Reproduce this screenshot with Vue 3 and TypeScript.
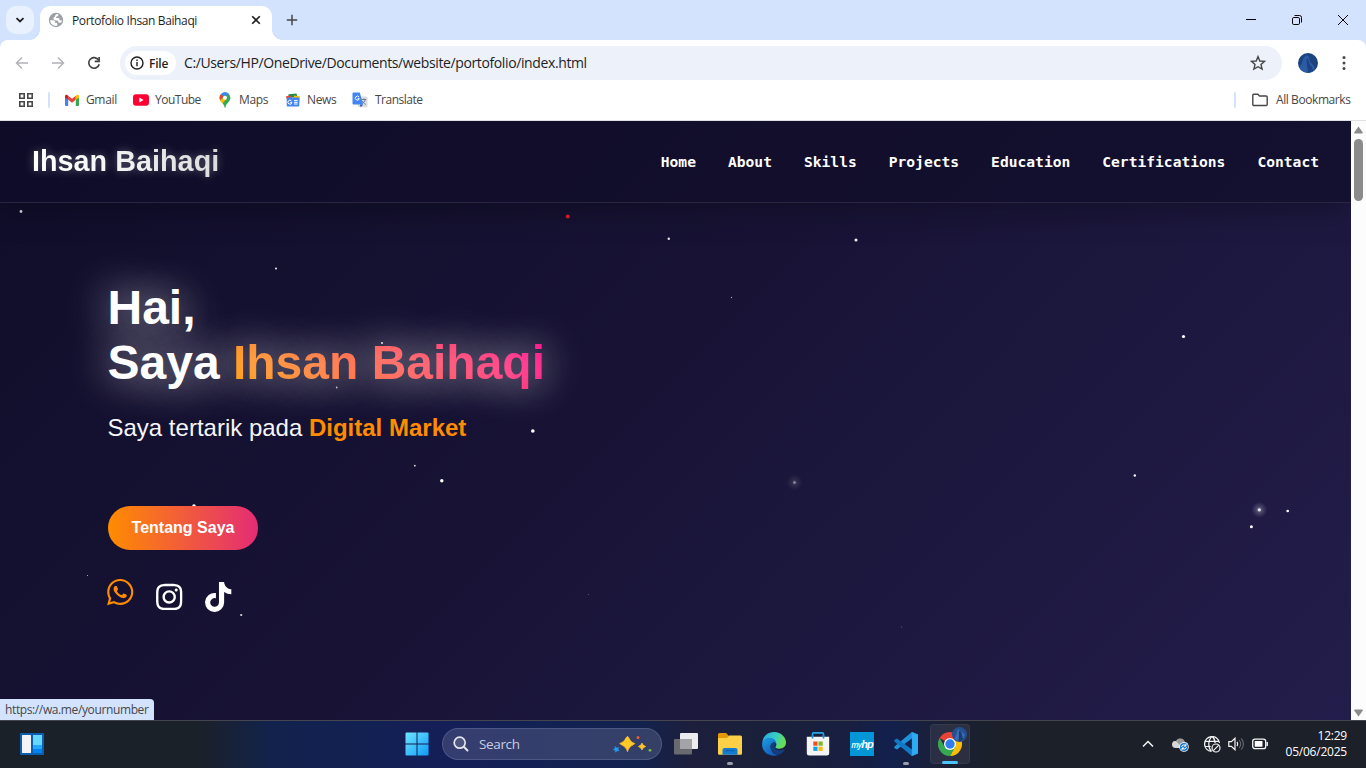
<script setup lang="ts">
interface Star { x: number; y: number; r: number; alpha: number; color?: string; glow?: number }

const navItems: string[] = ['Home', 'About', 'Skills', 'Projects', 'Education', 'Certifications', 'Contact']

const stars: Star[] = [
  { x: 21, y: 90.5, r: 1.4, alpha: 0.85 },
  { x: 567.8, y: 95.5, r: 2, alpha: 1, color: '#ee1c25' },
  { x: 668.8, y: 117.8, r: 1.2, alpha: 0.9 },
  { x: 856, y: 119, r: 1.5, alpha: 0.95 },
  { x: 276, y: 147.5, r: 1.1, alpha: 0.85 },
  { x: 731.5, y: 176.5, r: 0.7, alpha: 0.6 },
  { x: 1183.5, y: 215.5, r: 1.6, alpha: 1 },
  { x: 382, y: 222, r: 1.1, alpha: 0.85 },
  { x: 336.7, y: 266.5, r: 0.9, alpha: 0.7 },
  { x: 532.8, y: 310, r: 1.8, alpha: 1 },
  { x: 414.8, y: 344.7, r: 0.9, alpha: 0.85 },
  { x: 441.8, y: 359.8, r: 1.7, alpha: 1 },
  { x: 194, y: 385, r: 1.8, alpha: 1 },
  { x: 794.5, y: 361.5, r: 1.2, alpha: 0.45, glow: 0.2 },
  { x: 1134.8, y: 354.5, r: 1.2, alpha: 0.95 },
  { x: 1259.3, y: 388.8, r: 1.6, alpha: 0.8, glow: 0.45 },
  { x: 1287.7, y: 390, r: 1.3, alpha: 1 },
  { x: 1251.4, y: 405.8, r: 1.5, alpha: 1 },
  { x: 87.5, y: 454.5, r: 0.6, alpha: 0.7 },
  { x: 241.2, y: 494, r: 1.1, alpha: 0.85 },
  { x: 588.5, y: 473.5, r: 0.6, alpha: 0.3 },
  { x: 901.5, y: 506, r: 0.6, alpha: 0.3 },
]
</script>

<template>
  <div class="screen">
    <div class="tabstrip">
      <div class="tab-search">
        <svg width="10" height="10" viewBox="0 0 10 10"><path d="M1.500 3.200 5 6.500 8.500 3.200" fill="none" stroke="#1f1f1f" stroke-width="1.800" /></svg>
      </div>
      <div class="tab">
        <svg class="favicon" width="16" height="16" viewBox="0 0 16 16">
          <circle cx="8" cy="8" r="7.200" fill="#9aa0a6" />
          <path d="M8.200 2.300h2.300c0 1.300-.6 2-1.600 2.200-.9.200-1 .9-.7 1.500h2.300c.9 0 1 .8 1 1.400 0 .7.600.9 1 .9h1.300c0 1-.2 1.700-.6 2.400h-1.600c-1 0-1.600-.7-1.600-1.500 0-.5-.4-.8-.9-.8H7.400C6.200 8.400 5.500 7.500 5.500 6.500S6.200 4.700 7 4.700C7 3.500 7.600 3 8.200 2.300zM2.100 8.200h3c1.300 0 1.900.8 1.900 1.700v.8h1.200c.7 0 1.100.5 1.100 1.100v1.900C5.400 14.400 2.200 11.700 2.100 8.200z" fill="#fff" />
        </svg>
        <span class="tab-title">Portofolio Ihsan Baihaqi</span>
        <svg class="tab-close" width="10" height="10" viewBox="0 0 10 10"><path d="M1.200 1.200l7.600 7.600M8.800 1.200L1.200 8.800" stroke="#1f1f1f" stroke-width="1.600" /></svg>
      </div>
      <svg class="new-tab" width="12" height="12" viewBox="0 0 12 12"><path d="M6 .8v10.400M.8 6h10.400" stroke="#474747" stroke-width="1.500" /></svg>
      <div class="win-controls">
        <svg width="12" height="12" viewBox="0 0 12 12"><path d="M1 5.500h10" stroke="#000" /></svg>
        <svg width="12" height="12" viewBox="0 0 12 12"><rect x="1.500" y="3.500" width="7" height="7" rx="1.300" fill="none" stroke="#000" /><path d="M3.500 1.500H8.500a2 2 0 0 1 2 2v5" fill="none" stroke="#000" /></svg>
        <svg width="12" height="12" viewBox="0 0 12 12"><path d="M1 1l10 10M11 1L1 11" stroke="#000" /></svg>
      </div>
    </div>

    <div class="toolbar">
      <svg class="nav-ic" width="16" height="16" viewBox="0 0 16 16"><path d="M14 8H2.800M8 2.500 2.500 8 8 13.500" fill="none" stroke="#b1b3b6" stroke-width="1.500" /></svg>
      <svg class="nav-ic" width="16" height="16" viewBox="0 0 16 16"><path d="M2 8h11.200M8 2.500 13.500 8 8 13.500" fill="none" stroke="#b1b3b6" stroke-width="1.500" /></svg>
      <svg class="nav-ic" width="16" height="16" viewBox="0 0 16 16"><path d="M12.600 5.200A5.300 5.300 0 1 0 13.200 9.200" fill="none" stroke="#3c3f41" stroke-width="1.600" /><path d="M13.900 2v5.200H8.700V5.600h3.600V2z" fill="#3c3f41" /></svg>
      <div class="omnibox">
        <div class="file-chip">
          <svg width="14" height="14" viewBox="0 0 14 14"><circle cx="7" cy="7" r="6" fill="none" stroke="#1f1f1f" stroke-width="1.400" /><path d="M7 6v4.200M7 3.600v1.400" stroke="#1f1f1f" stroke-width="1.400" /></svg>
          <span>File</span>
        </div>
        <span class="url">C:/Users/HP/OneDrive/Documents/website/portofolio/index.html</span>
        <svg class="star-ic" width="16" height="16" viewBox="0 0 16 16"><path d="M8 1.600l1.800 4.400 4.800.4-3.600 3.100 1.100 4.600L8 11.700l-4.100 2.400L5 9.500 1.400 6.400l4.800-.4z" fill="none" stroke="#474747" stroke-width="1.400" /></svg>
      </div>
      <div class="avatar">
        <svg width="20" height="20" viewBox="0 0 20 20"><path d="M1 15C3 12 4.500 10 5 6l3-4 3 2 1 5 4 4 1 7H4z" fill="#2b5ca3" /><path d="M9 5c2 1 1.500 4 2.500 6s3.500 3 3.500 7l-5 2c0-5-2-8-1-15z" fill="#1b4284" /></svg>
      </div>
      <svg class="more" width="4" height="14" viewBox="0 0 4 14"><circle cx="2" cy="1.600" r="1.500" fill="#474747" /><circle cx="2" cy="7" r="1.500" fill="#474747" /><circle cx="2" cy="12.400" r="1.500" fill="#474747" /></svg>
    </div>

    <div class="bookmarks">
      <svg class="apps" width="14" height="14" viewBox="0 0 14 14"><path d="M.8.8h4.400v4.400H.8zM8.800.8h4.400v4.400H8.800zM.8 8.800h4.400v4.400H.8zM8.800 8.800h4.400v4.400H8.800z" fill="none" stroke="#474747" stroke-width="1.600" /></svg>
      <i class="sep"></i>
      <div class="bm gmail">
        <svg width="16" height="16" viewBox="0 0 16 16"><path d="M1 3.500V13a.9.9 0 0 0 .9.900H4.200V6.500z" fill="#4285f4" /><path d="M15 3.500V13a.9.9 0 0 1-.9.900h-2.300V6.500z" fill="#34a853" /><path d="M4.200 7.800V3.800L8 6.700l3.800-2.900v4L8 10.700z" fill="#ea4335" /><path d="M1 4.300C1 2.500 2.900 2.200 4.200 3.800v4L1 5.500z" fill="#c5221f" /><path d="M15 4.300c0-1.800-1.900-2.100-3.200-.5v4L15 5.500z" fill="#fbbc04" /></svg>
        <span>Gmail</span>
      </div>
      <div class="bm youtube">
        <svg width="16" height="16" viewBox="0 0 16 16"><rect x="0" y="2.300" width="16" height="11.400" rx="3" fill="#ff0033" /><path d="M6.300 5.600v4.800L10.500 8z" fill="#fff" /></svg>
        <span>YouTube</span>
      </div>
      <div class="bm maps">
        <svg width="16" height="16" viewBox="0 0 16 16"><path d="M8 .3a5.400 5.400 0 0 0-5.400 5.400C2.600 9.700 7 11 7.500 15.200c.1.700.9.700 1 0C9 11 13.400 9.700 13.400 5.700A5.400 5.400 0 0 0 8 .3z" fill="#34a853" /><path d="M8 .3a5.400 5.400 0 0 0-4.100 1.900L6.500 4.500 12.200 2.300A5.400 5.400 0 0 0 8 .3z" fill="#4285f4" /><path d="M3.900 2.200a5.400 5.400 0 0 0-.8 5.700L6.500 4.500z" fill="#ea4335" /><path d="M3.100 7.900c.6 1.300 1.600 2.300 2.500 3.400L9.500 7 6.300 6z" fill="#fbbc04" /><circle cx="8" cy="5.700" r="2" fill="#fff" /></svg>
        <span>Maps</span>
      </div>
      <div class="bm news">
        <svg width="16" height="16" viewBox="0 0 16 16"><path d="M3.500 2.300 11.500 1.500l1 4H3.500z" fill="#1e8e4a" /><path d="M.9 4.600l4-1.300 3 4H1.900z" fill="#ea4335" /><path d="M9 3.500l6.200.9-.9 6H9z" fill="#fbbc04" /><rect x="1.700" y="5.600" width="12.600" height="9" rx="1" fill="#4285f4" /><path d="M6.500 9a2 2 0 1 0 .4 1.500H5.300M9 8.600h3.600M9 10.300h3.600M9 12h3.600" fill="none" stroke="#fff" stroke-width="1" /></svg>
        <span>News</span>
      </div>
      <div class="bm translate">
        <svg width="16" height="16" viewBox="0 0 16 16"><rect x="6" y="4.500" width="9.500" height="10.800" rx="1" fill="#dadce0" /><path d="M9.300 7.500h5M11.800 6.500v1M13.300 7.600c-.5 2-2 3.400-3.400 4M10.300 9c.6 1.300 2 2.700 3.400 3.400" fill="none" stroke="#66757f" stroke-width=".9" /><path d="M8 12.500h3l-2.200 2.800z" fill="#174ea6" /><path d="M1.500.5h6.300l3.300 12h-9.600a1 1 0 0 1-1-1v-10a1 1 0 0 1 1-1z" fill="#4285f4" /><path d="M7 5a2 2 0 1 0 .3 1.700H5.600" fill="none" stroke="#fff" stroke-width="1" /></svg>
        <span>Translate</span>
      </div>
      <div class="all-bm">
        <i class="sep"></i>
        <svg width="16" height="14" viewBox="0 0 16 14"><path d="M.8 2.300a1 1 0 0 1 1-1H5.800L7.500 3h6.700a1 1 0 0 1 1 1v7.500a1 1 0 0 1-1 1H1.800a1 1 0 0 1-1-1z" fill="none" stroke="#474747" stroke-width="1.400" /></svg>
        <span>All Bookmarks</span>
      </div>
    </div>

    <div class="viewport">
      <main class="page">
        <svg class="sky" width="1351" height="599" viewBox="0 0 1351 599">
          <defs><radialGradient id="halo"><stop offset="0" stop-color="#fff" /><stop offset=".4" stop-color="#fff" stop-opacity=".4" /><stop offset="1" stop-color="#fff" stop-opacity="0" /></radialGradient></defs>
          <template v-for="(s, i) in stars" :key="i">
            <circle v-if="s.glow" :cx="s.x" :cy="s.y" r="8" fill="url(#halo)" :opacity="s.glow" />
            <circle :cx="s.x" :cy="s.y" :r="s.r" :fill="s.color ?? '#fff'" :opacity="s.alpha" />
          </template>
        </svg>
        <header class="site-header">
          <div class="logo">Ihsan Baihaqi</div>
          <nav class="site-nav">
            <a v-for="item in navItems" :key="item">{{ item }}</a>
          </nav>
        </header>
        <section class="hero">
          <h1>Hai,<br />Saya <span>Ihsan Baihaqi</span></h1>
          <p>Saya tertarik pada <b>Digital Market</b></p>
          <a class="cta">Tentang Saya</a>
          <div class="socials">
            <svg class="wa" viewBox="0 0 448 512"><path d="M380.900 97.100C339 55.100 283.200 32 223.900 32c-122.400 0-222 99.600-222 222 0 39.100 10.200 77.300 29.600 111L0 480l117.700-30.900c32.400 17.700 68.900 27 106.100 27h.1c122.300 0 224.100-99.600 224.100-222 0-59.300-25.200-115-67.100-157zm-157 341.600c-33.200 0-65.700-8.900-94-25.700l-6.700-4-69.800 18.300L72 359.200l-4.400-7c-18.500-29.400-28.200-63.300-28.200-98.200 0-101.700 82.800-184.500 184.600-184.500 49.300 0 95.600 19.200 130.400 54.100 34.800 34.900 56.200 81.200 56.100 130.500 0 101.800-84.900 184.600-186.600 184.600zm101.200-138.200c-5.500-2.800-32.800-16.200-37.900-18-5.100-1.900-8.800-2.800-12.500 2.800-3.700 5.600-14.300 18-17.600 21.800-3.200 3.700-6.500 4.200-12 1.400-32.600-16.300-54-29.100-75.500-66-5.700-9.800 5.700-9.100 16.300-30.300 1.800-3.700.9-6.900-.5-9.700-1.400-2.800-12.500-30.100-17.100-41.200-4.500-10.800-9.100-9.300-12.500-9.500-3.200-.2-6.900-.2-10.600-.2-3.700 0-9.700 1.400-14.800 6.900-5.100 5.600-19.400 19-19.400 46.300 0 27.300 19.900 53.700 22.600 57.400 2.800 3.700 39.100 59.700 94.800 83.800 35.200 15.200 49 16.500 66.600 13.900 10.700-1.600 32.800-13.400 37.400-26.400 4.600-13 4.600-24.100 3.200-26.400-1.300-2.500-5-3.900-10.500-6.600z" /></svg>
            <svg viewBox="0 0 448 512"><path d="M224.100 141c-63.600 0-114.900 51.300-114.900 114.900s51.300 114.900 114.900 114.900S339 319.500 339 255.900 287.700 141 224.100 141zm0 189.600c-41.100 0-74.700-33.500-74.700-74.700s33.500-74.700 74.700-74.700 74.700 33.500 74.700 74.700-33.600 74.700-74.700 74.700zm146.400-194.300c0 14.900-12 26.800-26.800 26.800-14.900 0-26.800-12-26.800-26.800s12-26.800 26.800-26.800 26.800 12 26.800 26.800zm76.100 27.200c-1.700-35.900-9.900-67.700-36.200-93.900-26.200-26.200-58-34.400-93.900-36.200-37-2.100-147.900-2.100-184.900 0-35.800 1.700-67.600 9.900-93.900 36.100s-34.400 58-36.200 93.900c-2.100 37-2.100 147.900 0 184.900 1.700 35.900 9.900 67.700 36.200 93.900s58 34.400 93.900 36.200c37 2.100 147.900 2.100 184.900 0 35.900-1.700 67.700-9.900 93.900-36.200 26.200-26.200 34.400-58 36.200-93.900 2.100-37 2.100-147.800 0-184.800zM398.800 388c-7.800 19.600-22.900 34.700-42.600 42.600-29.500 11.700-99.500 9-132.100 9s-102.700 2.600-132.100-9c-19.600-7.800-34.700-22.900-42.600-42.600-11.700-29.500-9-99.500-9-132.100s-2.600-102.700 9-132.100c7.800-19.600 22.900-34.700 42.600-42.600 29.500-11.700 99.500-9 132.100-9s102.700-2.600 132.100 9c19.600 7.800 34.700 22.900 42.600 42.600 11.700 29.500 9 99.500 9 132.100s2.700 102.700-9 132.100z" /></svg>
            <svg viewBox="0 0 448 512"><path d="M448 209.910a210.060 210.060 0 0 1-122.770-39.250V349.380A162.550 162.550 0 1 1 185 188.310V278.200a74.620 74.620 0 1 0 52.230 71.180V0l88 0a121.180 121.180 0 0 0 1.860 22.170A122.180 122.180 0 0 0 381 102.390a121.430 121.430 0 0 0 67 20.140Z" /></svg>
          </div>
        </section>
        <div class="status">https://wa.me/yournumber</div>
      </main>
      <div class="scrollbar">
        <svg width="9" height="8" viewBox="0 0 9 8"><path d="M4.500.4 8.800 6.500q0 .9-.6.900H.8Q.2 7.400.2 6.500z" fill="#8b8b8b" /></svg>
        <i class="thumb"></i>
        <svg class="down" width="9" height="8" viewBox="0 0 9 8"><path d="M4.500 7.600 8.800 1.500q0-.9-.6-.9H.8Q.2.600.2 1.500z" fill="#8b8b8b" /></svg>
      </div>
    </div>

    <footer class="taskbar">
      <svg class="widgets" width="24" height="22" viewBox="0 0 24 22"><rect width="24" height="22" rx="1" fill="#0c5fae" /><rect x="2" y="2" width="9" height="18" rx=".6" fill="#f4f4f6" /><rect x="13" y="2" width="9" height="10" fill="#66d8ff" /><rect x="13" y="12" width="9" height="4" fill="#21a9fb" /><rect x="13" y="16" width="9" height="4" fill="#0383ee" /></svg>
      <div class="dock">
        <svg class="start" width="24" height="24" viewBox="0 0 24 24">
          <defs><linearGradient id="win" x1="0" y1="0" x2="1" y2="1"><stop offset="0" stop-color="#6fe6fd" /><stop offset="1" stop-color="#0f9bf8" /></linearGradient></defs>
          <path d="M.5 1.500a1 1 0 0 1 1-1h10v11H.5zM12.500.500h10a1 1 0 0 1 1 1v10h-11zM.5 12.500h11v11h-10a1 1 0 0 1-1-1zM12.500 12.500h11v10a1 1 0 0 1-1 1h-10z" fill="url(#win)" />
        </svg>
        <div class="search">
          <svg width="16" height="16" viewBox="0 0 16 16"><circle cx="6.700" cy="6.700" r="5.500" fill="rgba(255,255,255,.12)" stroke="#e3e5ee" stroke-width="1.700" /><path d="M10.800 10.800l3.700 3.700" stroke="#e3e5ee" stroke-width="2" stroke-linecap="round" /></svg>
          <span>Search</span>
          <svg class="sparkle" width="40" height="20" viewBox="0 0 40 20">
            <path d="M15.500 2.500c1.500 0 1.600 5.200 7.200 7-.1 1.200-5.500 1.800-7.200 8-1.500-5.800-7-6.700-7.700-8C13.500 7.700 14 2.500 15.500 2.500z" fill="#ffc928" stroke="#fbbb22" stroke-width="1" />
            <path d="M30 9.200q.7 2.600 3.500 3.300-2.800.8-3.500 3.300-.9-2.500-3.500-3.300 2.600-.7 3.500-3.300z" fill="#ffc42a" stroke="#ffc42a" stroke-width="1" />
            <path d="M3 12.500l1.700 1.500 1.900-.6-.6 1.900 1.200 1.500-2-.1-1.500 1.600-.6-2-1.900-.7 1.700-1z" fill="#1e9df0" stroke="#1e9df0" stroke-width=".5" />
            <circle cx="26" cy="3.500" r="1.500" fill="#ef5b2d" /><circle cx="38" cy="16.300" r="1.400" fill="#75bd45" />
          </svg>
        </div>
        <div class="app">
          <svg width="24" height="24" viewBox="0 0 24 24"><rect x="6" y="1" width="18" height="16" rx="1" fill="#ececef" /><rect x="0" y="7" width="18" height="15.500" rx="1" fill="#686a70" /><rect x="6" y="7" width="12" height="10" fill="#a4a4a8" /></svg>
        </div>
        <div class="app run">
          <svg width="24" height="24" viewBox="0 0 24 24"><path d="M0 2.500a1.500 1.500 0 0 1 1.500-1.500H8l2.500 2.500V8H0z" fill="#e59a05" /><path d="M0 6h9l2-2.500h11.500A1.500 1.500 0 0 1 24 5v16.500a1.200 1.200 0 0 1-1.200 1.200H1.200A1.200 1.200 0 0 1 0 21.500z" fill="#ffcf48" /><path d="M4.500 22.700V18a2 2 0 0 1 2-2h11a2 2 0 0 1 2 2v4.700z" fill="#137bd0" /><path d="M7.500 18.700h9" stroke="#0a5ba8" /></svg>
        </div>
        <div class="app">
          <svg width="24" height="24" viewBox="0 0 24 24">
            <defs><linearGradient id="edgeA" x1="0" y1="0" x2="1" y2=".3"><stop offset="0" stop-color="#23a9e6" /><stop offset=".6" stop-color="#38cfc3" /><stop offset="1" stop-color="#69dc52" /></linearGradient><linearGradient id="edgeB" x1="0" y1="0" x2=".6" y2="1"><stop offset="0" stop-color="#1ba0e4" /><stop offset="1" stop-color="#125cb8" /></linearGradient></defs>
            <path d="M.3 10.500C1 4 6 0 12 0c7.500 0 12 5.500 12 10.500 0 4-3 6.200-6.500 6.200-3.500 0-4.500-1.300-4-2 .7-.9 1-1.600.8-2.700C13.500 8 4 5.500.3 10.500z" fill="url(#edgeA)" />
            <path d="M.2 11C1.200 7.200 4.500 5.800 7.500 5.800c4.500 0 7 3.200 6.800 6.200-.5-1.500-1.700-1.800-2.800-1.500-3 1-3.500 4-2.500 7 1 3.200 4.500 5.500 7.500 5.200C9 26-1 21 .2 11z" fill="url(#edgeB)" />
            <path d="M8.600 13c-.8 5 3.400 9 8.400 9.700 2.500-.9 4.500-2.500 5.600-4.700.3-.6-.2-.7-.6-.5-5 2-9.500 0-9.500-2.500 0-2 2-3 .7-4.200-1.500-1-4 .2-4.600 2.200z" fill="#123f80" />
          </svg>
        </div>
        <div class="app">
          <svg width="24" height="24" viewBox="0 0 24 24"><path d="M6.500 6V1.900A1 1 0 0 1 7.500.900h9a1 1 0 0 1 1 1V6" fill="none" stroke="#27a5e9" stroke-width="1.600" /><path d="M.8 4.800h22.400V21a2.500 2.500 0 0 1-2.500 2.500H3.300A2.500 2.500 0 0 1 .8 21z" fill="#f4f4f5" /><path d="M6.500 3v3.500M17.500 3v3.500" stroke="#1d87cf" stroke-width="1.600" /><path d="M7.300 9.500h4.200v4.200H7.300z" fill="#f04f23" /><path d="M12.500 9.500h4.200v4.200h-4.200z" fill="#7ab928" /><path d="M7.300 14.700h4.200v4.200H7.300z" fill="#0ba3ea" /><path d="M12.500 14.700h4.200v4.200h-4.200z" fill="#fdb90c" /></svg>
        </div>
        <div class="app"><div class="myhp"><span>my</span><b>hp</b></div></div>
        <div class="app run">
          <svg width="24" height="24" viewBox="0 0 24 24"><path d="M17.800 0 24 2.500v19L17.800 24 7.500 14 3 17.600l-2.700-1.500V14.700L17.800 0z" fill="#1e91dc" /><path d="M.3 8l2.700-1.500L18 18v6L.3 9.400z" fill="#1277c4" /><path d="M17.800 0 24 2.500v19L17.800 24z" fill="#2fa9f2" /><path d="M17.800 6.500v11L10.500 12z" fill="#15224d" /></svg>
        </div>
        <div class="app active">
          <svg width="28" height="26" viewBox="0 0 28 26">
            <path d="M12 14 1.600 8A12 12 0 0 1 22.400 8z" fill="#ea4335" /><path d="M12 14 22.400 8A12 12 0 0 1 12 26l4-8z" fill="#fbbc04" /><path d="M1.600 8A12 12 0 0 0 12 26l5.200-9L12 14 6.800 17z" fill="#34a853" /><circle cx="12" cy="14" r="6" fill="#fff" /><circle cx="12" cy="14" r="4.700" fill="#2d7cf0" />
          </svg>
          <i class="badge"><svg width="15" height="15" viewBox="0 0 15 15"><circle cx="7.500" cy="7.500" r="7.500" fill="#24508f" /><path d="M2 12c2-3 2.500-5 3-8l2-2 1 5-2 7zM9 4l4 4-2 4z" fill="#3a6bb0" /><path d="M7 4l2 1 2 8-4 1z" fill="#1a3c72" /></svg></i>
        </div>
      </div>
      <div class="tray">
        <svg class="chev" width="12" height="8" viewBox="0 0 12 8"><path d="M1 6.500 6 1.500l5 5" fill="none" stroke="#f5f5f5" stroke-width="1.500" /></svg>
        <svg class="cloud" width="17" height="15" viewBox="0 0 17 15"><path d="M3.500 11a3.500 3.500 0 0 1 .3-7A5 5 0 0 1 13 5a3 3 0 0 1 0 6z" fill="#999" /><path d="M3.500 11a3.500 3.500 0 0 1 .3-7l7 7z" fill="#d6d6d6" /><circle cx="12" cy="10" r="4.800" fill="#fff" /><circle cx="12" cy="10" r="4.100" fill="#1577cc" /><path d="M9.500 9.800a2.500 2.500 0 0 1 4.300-1M14.500 10.200a2.500 2.500 0 0 1-4.300 1M13.900 7v2h-2M10.100 13v-2h2" fill="none" stroke="#fff" stroke-width="1" /></svg>
        <svg class="globe" width="17" height="17" viewBox="0 0 17 17"><g fill="none" stroke="#f3f3f3" stroke-width="1.200"><path d="M7.500 15.500A7.500 7.500 0 1 1 15.500 7M7.500 15.500C3.800 12 3.800 4 8 .6 10 2 11 4.500 11.100 7M1.200 5.300h13.500M1.200 10.500h5.500" /><circle cx="12" cy="12" r="4" /><path d="M9.300 14.700l5.500-5.500" /></g></svg>
        <svg class="vol" width="17" height="14" viewBox="0 0 17 14"><path d="M.8 4.700h2.600L7 1.200v11.600L3.400 9.300H.8z" fill="none" stroke="#f3f3f3" stroke-width="1.200" /><path d="M9 4.800q1.500 2.200 0 4.400" fill="none" stroke="#f3f3f3" stroke-width="1.200" /><path d="M11.200 3q3 4 0 8M13.300 1.300q4.300 5.700 0 11.400" fill="none" stroke="#636870" stroke-width="1.100" /></svg>
        <svg class="bat" width="17" height="12" viewBox="0 0 17 12"><rect x=".7" y="1.200" width="13" height="9.400" rx="2.200" fill="none" stroke="#f3f3f3" stroke-width="1.300" /><rect x="2.700" y="3" width="7.800" height="5.800" rx=".6" fill="#fff" /><path d="M15.200 4v4" stroke="#f3f3f3" stroke-width="1.500" /></svg>
        <div class="clock"><div class="time">12:29</div><div class="date">05/06/2025</div></div>
      </div>
    </footer>
  </div>
</template>

<style>
body { margin: 0; overflow: hidden; }
</style>

<style scoped>
* { box-sizing: border-box; }
svg { display: block; flex: none; }
i { display: block; }
.screen { width: 1366px; height: 768px; display: flex; flex-direction: column; overflow: hidden; background: linear-gradient(#d3e3fd 60px, #fff 60px); font-family: "Open Sans", "Noto Sans", sans-serif; white-space: nowrap; }

.tabstrip { height: 40px; flex: none; display: flex; align-items: flex-start; }
.tab-search { width: 28px; height: 28px; margin: 6px 6px 0 6px; border-radius: 10px; background: #e9f1fe; display: flex; align-items: center; justify-content: center; }
.tab { position: relative; width: 232px; height: 34px; margin-top: 6px; padding: 0 11px 6px 8px; border-radius: 10px 10px 0 0; background: #fff; display: flex; align-items: center; }
.tab::before, .tab::after { content: ""; position: absolute; bottom: 0; width: 10px; height: 10px; }
.tab::before { left: -10px; background: radial-gradient(circle at 0 0, transparent 9.600px, #fff 10px); }
.tab::after { right: -10px; background: radial-gradient(circle at 100% 0, transparent 9.600px, #fff 10px); }
.tab-title { margin-left: 8px; width: 170px; font-size: 12px; letter-spacing: -0.370px; color: #1f1f1f; }
.tab-close { margin-left: auto; }
.new-tab { margin: 14px 0 0 14px; }
.win-controls { margin: 14px 17px 0 auto; display: flex; gap: 34px; }

.toolbar { height: 46px; flex: none; background: #fff; border-radius: 8px 8px 0 0; display: flex; align-items: center; padding-left: 14px; }
.nav-ic { margin-right: 20px; }
.omnibox { width: 1162px; height: 34px; margin-left: -2px; border-radius: 17px; background: #ecf1fa; display: flex; align-items: center; padding-left: 5px; }
.file-chip { width: 51px; height: 24px; border-radius: 12px; background: #fff; display: flex; align-items: center; gap: 5px; padding-left: 5px; font-size: 12px; font-weight: 600; color: #1f1f1f; letter-spacing: -0.200px; }
.url { margin-left: 8px; width: 410px; padding-bottom: 1px; font-size: 14px; letter-spacing: -0.380px; color: #1f1f1f; }
.star-ic { margin-left: auto; margin-right: 16px; }
.avatar { width: 20px; height: 20px; margin-left: 16px; border-radius: 50%; overflow: hidden; background: #1c4380; }
.more { margin-left: 24px; }

.bookmarks { height: 35px; flex: none; background: #fff; border-bottom: 1px solid #dee1e3; display: flex; align-items: center; padding: 0 15px 6px 19px; font-size: 12px; color: #474747; letter-spacing: -0.350px; }
.bookmarks span { padding-bottom: 1px; }
.sep { width: 2px; height: 16px; border-radius: 1px; background: #d3e3fd; }
.apps + .sep { margin-left: 15px; }
.bm { display: flex; align-items: center; gap: 6px; }
.gmail { margin-left: 14px; width: 69px; }
.youtube { width: 84px; letter-spacing: -0.500px; }
.maps { width: 68px; }
.news { width: 67px; }
.translate { gap: 7px; letter-spacing: -0.500px; }
.all-bm { margin-left: auto; display: flex; align-items: center; letter-spacing: -0.420px; }
.all-bm svg { margin: 0 8px 0 16px; }
.all-bm span { width: 75px; }

.viewport { height: 599px; flex: none; display: flex; }
.page { position: relative; width: 1351px; height: 599px; overflow: hidden; background: linear-gradient(135deg, #100d2a 0%, #181335 45%, #231d4b 100%); font-family: "Liberation Sans", Arial, sans-serif; color: #fff; }
.sky { position: absolute; left: 0; top: 0; }
.site-header { position: relative; height: 82px; padding: 0 32px; background: rgba(16, 12, 40, 0.65); border-bottom: 1px solid #2a2640; box-shadow: 0 8px 32px rgba(0, 0, 0, 0.28); display: flex; align-items: center; justify-content: space-between; }
.logo { font-size: 28.800px; font-weight: 700; line-height: 33px; background: linear-gradient(45deg, #fff 20%, #d4d4d4); background-clip: text; -webkit-background-clip: text; color: transparent; text-shadow: 0 0 10px rgba(255, 255, 255, 0.3); }
.site-nav { display: flex; gap: 32px; margin-top: 1px; font: 700 14.620px/18px "DejaVu Sans Mono", monospace; }
.hero { position: relative; padding: 77px 0 0 107.500px; }
h1 { margin: 0; font-size: 48px; line-height: 55px; font-weight: 700; text-shadow: 0 0 40px rgba(255, 255, 255, 0.8); }
h1 span { background: linear-gradient(45deg, #ff9d00, #ff008c); background-clip: text; -webkit-background-clip: text; color: transparent; }
p { margin: 24px 0 0; font-size: 24px; line-height: 27px; color: #f6f5f9; }
p b { color: #ff8c00; }
.cta { display: flex; align-items: center; justify-content: center; width: 150px; height: 44px; margin: 65px 0 0 .5px; border-radius: 22px; background: linear-gradient(90deg, #ff8c00, #e42c75); font-size: 16px; font-weight: 700; }
.socials { display: flex; gap: 22.700px; margin: 32px 0 0 -.4px; }
.socials svg { height: 30px; width: 26.400px; fill: #fff; }
.socials .wa { fill: #ff8c00; transform: translateY(-5px); }
.status { position: absolute; left: 0; bottom: 0; width: 154px; height: 21px; padding-left: 5px; background: #d3e3fd; border-radius: 0 4px 0 0; font: 12px/21px "Open Sans", sans-serif; letter-spacing: -0.380px; color: #474747; }
.scrollbar { width: 15px; background: #fcfcfc; display: flex; flex-direction: column; align-items: center; padding: 5px 0 3px; }
.thumb { width: 9px; height: 62px; margin-top: 5px; border-radius: 5px; background: #8b8b8b; }
.down { margin-top: auto; }

.taskbar { height: 48px; flex: none; padding-bottom: 1px; border-top: 1px solid #45454f; background: linear-gradient(90deg, #1b2129 0, #1b2129 200px, #12224c 270px, #141f58 440px, #12224e 640px, #1d1f3c 690px, #1a203a 760px, #181f40 850px, #12204d 890px, #1b2036 940px, #1b2029 1010px); display: flex; align-items: center; }
.widgets { margin-left: 20px; }
.dock { display: flex; align-items: center; margin-left: 361px; }
.search { width: 220px; height: 32px; margin: 0 4px 0 13px; border-radius: 16px; background: rgba(120, 125, 160, 0.33); border: 1px solid rgba(140, 145, 185, 0.3); display: flex; align-items: center; padding: 0 9px 0 10px; font-size: 13.500px; color: #c9cce0; letter-spacing: -0.350px; }
.search span { margin-left: 10px; }
.sparkle { margin-left: auto; }
.app { position: relative; width: 40px; height: 40px; margin-right: 4px; border-radius: 4px; display: flex; align-items: center; justify-content: center; }
.run::after { content: ""; position: absolute; left: 17px; bottom: -1px; width: 6px; height: 3px; border-radius: 2px; background: #9b9da9; }
.active { background: rgba(255, 255, 255, 0.07); border: 1px solid rgba(255, 255, 255, 0.05); }
.active > svg { margin: -2px 0 0 4px; }
.active::after { content: ""; position: absolute; left: 11px; bottom: -1px; width: 16px; height: 3px; border-radius: 2px; background: #4cc2ff; }
.badge { position: absolute; left: 21px; top: 2px; }
.myhp { width: 24px; height: 24px; background: #0296d6; color: #fff; display: flex; align-items: center; justify-content: center; font-size: 8px; font-style: italic; font-weight: 600; letter-spacing: -0.600px; }
.myhp b { font: italic 700 11px "Liberation Sans", sans-serif; letter-spacing: -1px; }
.tray { margin-left: auto; margin-right: 19px; display: flex; align-items: center; color: #fff; }
.chev { margin-right: 18px; }
.cloud { margin-right: 15px; }
.globe { margin-right: 7px; }
.vol { margin-right: 7px; }
.bat { margin-right: 14px; }
.clock { width: 64px; font-size: 12px; line-height: 16px; letter-spacing: -0.220px; display: flex; flex-direction: column; align-items: flex-end; }
</style>
